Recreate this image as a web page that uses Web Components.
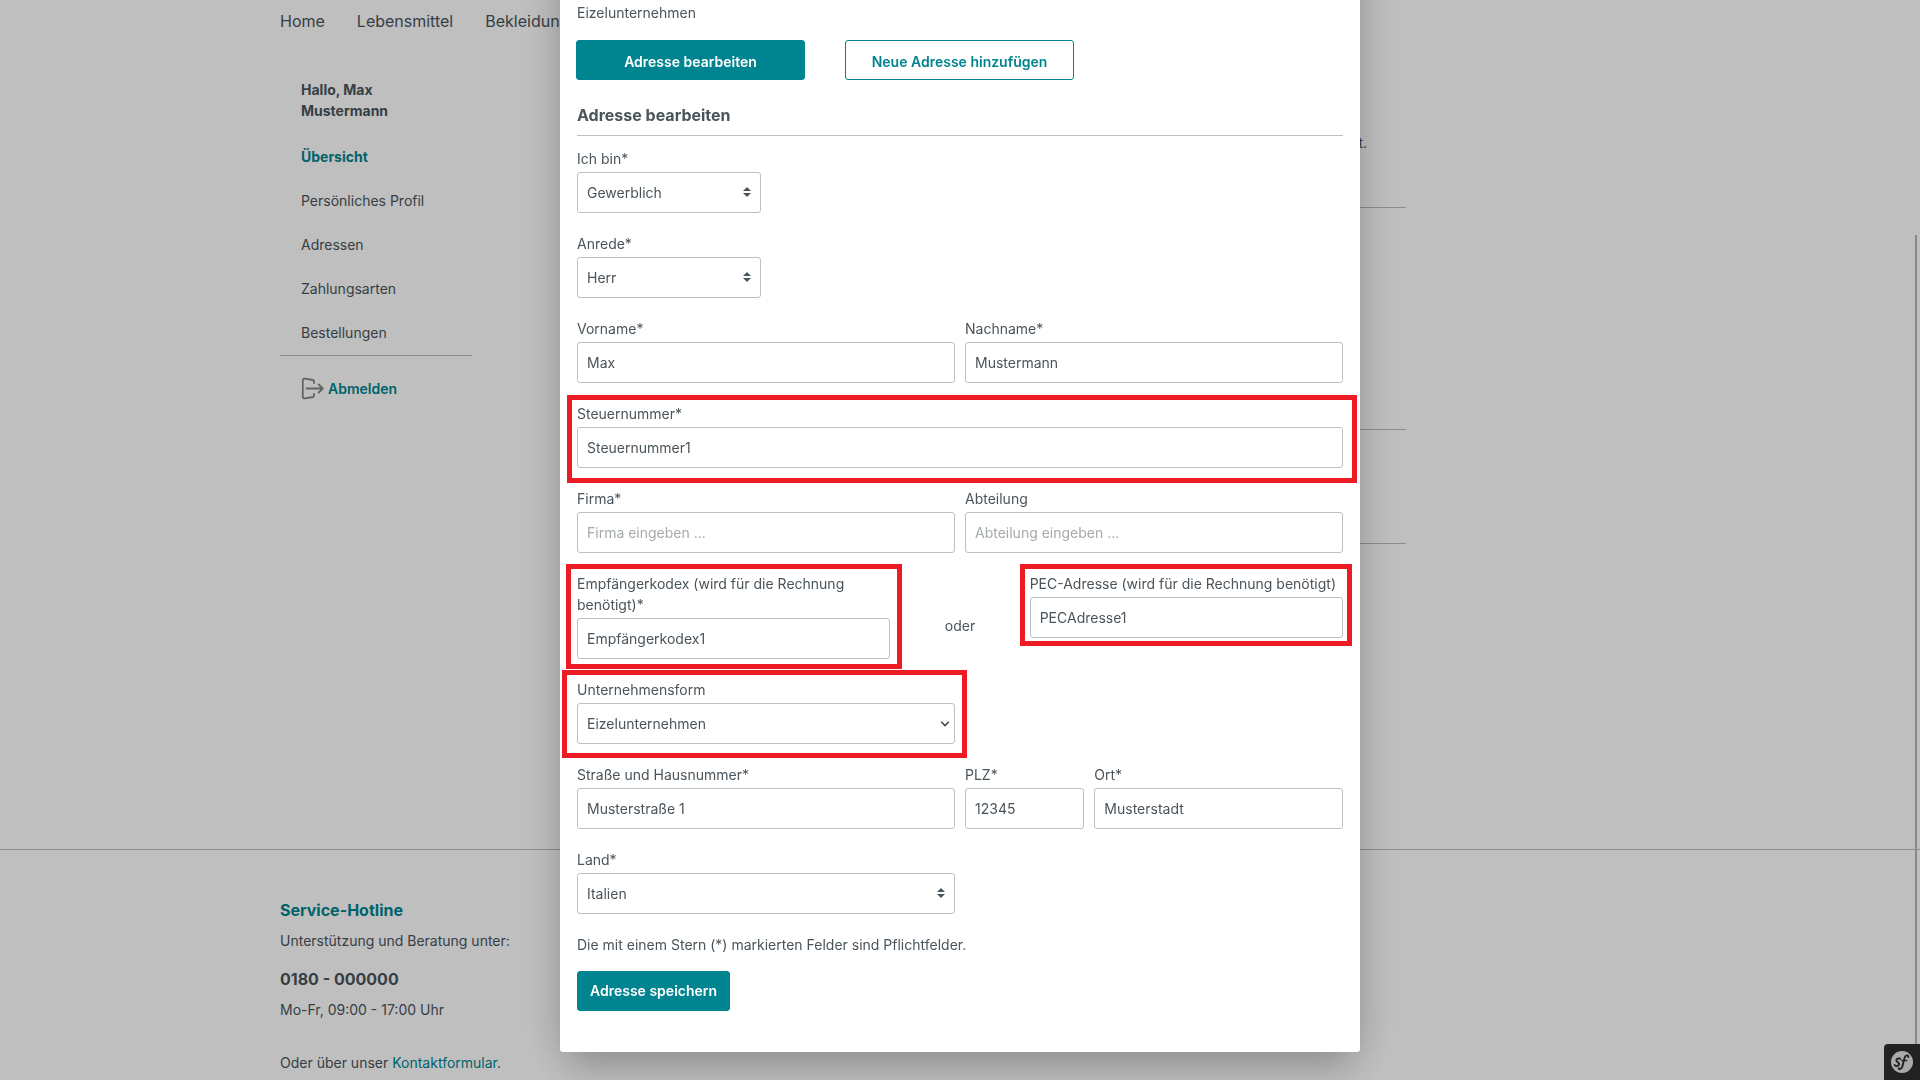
<!DOCTYPE html>
<html lang="de">
<head>
<meta charset="utf-8">
<title>Adresse bearbeiten</title>
<style>
  :root {
    --brand: #008490;
    --text: #4a545b;
    --line: #bcc1c7;
    --mark: #ed1c24;
  }
  html, body { height: 100%; }
  body {
    margin: 0;
    overflow: hidden;
    background: #fff;
    color: var(--text);
    font: 400 14px/21px Inter, "Liberation Sans", sans-serif;
  }
</style>
</head>
<body>
<shop-page>
  <shop-nav slot="nav"></shop-nav>
  <account-sidebar slot="sidebar"></account-sidebar>
  <account-overview slot="content"></account-overview>
  <shop-footer slot="footer"></shop-footer>
</shop-page>
<address-modal>
  <address-form></address-form>
</address-modal>
<debug-toolbar></debug-toolbar>

<script>
  const define = (name, html, setup) => {
    const template = document.createElement("template");
    template.innerHTML = "<style>*{box-sizing:border-box}a{color:inherit;text-decoration:none}</style>" + html;
    customElements.define(name, class extends HTMLElement {
      constructor() {
        super();
        this.attachShadow({ mode: "open" }).append(template.content.cloneNode(true));
      }
      connectedCallback() {
        if (setup && !this.ready) { this.ready = true; setup(this, this.shadowRoot); }
      }
    });
  };

  /* Shop page behind the dialog */
  define("shop-page", `
    <style>
      :host { display: flex; flex-direction: column; height: 100vh; overflow: hidden; position: relative; }
      .wrap { width: 100%; max-width: 1360px; margin: 0 auto; }
      .main { display: grid; grid-template-columns: 192px 1fr; column-gap: 96px; padding-top: 46px; height: 816px; flex: none; }
      footer { border-top: 1px solid #b8bcc0; padding-top: 48px; flex: none; }
      .thumb { position: absolute; right: 3px; top: 235px; bottom: 0; width: 2px; background: #b4b4b4; }
    </style>
    <header class="wrap"><slot name="nav"></slot></header>
    <main class="wrap main"><slot name="sidebar"></slot><slot name="content"></slot></main>
    <footer><div class="wrap"><slot name="footer"></slot></div></footer>
    <div class="thumb"></div>
  `);

  define("shop-nav", `
    <style>
      :host { display: block; }
      nav { display: flex; gap: 32px; padding-top: 9px; font-size: 16px; line-height: 24px; }
    </style>
    <nav><a href="#home">Home</a><a href="#lebensmittel">Lebensmittel</a><a href="#bekleidung">Bekleidung</a></nav>
  `);

  define("account-sidebar", `
    <style>
      :host { display: block; }
      .hello { margin: 0 64px 13px 21px; font-weight: 700; }
      ul { list-style: none; margin: 0; padding: 0 0 1px 21px; }
      li { padding: 12px 0 11px; }
      .active { color: var(--brand); font-weight: 700; }
      .logout { display: flex; align-items: center; gap: 4px; padding: 21px 0 0 21px; border-top: 1px solid #b8bcc0; color: var(--brand); font-weight: 600; }
      svg { display: block; width: 23px; height: 23px; }
    </style>
    <p class="hello">Hallo, Max Mustermann</p>
    <ul>
      <li><a class="active" href="#uebersicht">Übersicht</a></li>
      <li><a href="#profil">Persönliches Profil</a></li>
      <li><a href="#adressen">Adressen</a></li>
      <li><a href="#zahlungsarten">Zahlungsarten</a></li>
      <li><a href="#bestellungen">Bestellungen</a></li>
    </ul>
    <a class="logout" href="#abmelden">
      <svg viewBox="0 0 23 23" fill="none" stroke="#858585" stroke-width="1.8" stroke-linecap="round" stroke-linejoin="round" aria-hidden="true">
        <path d="M13 6V4.2Q13 3.2 12 3L4 1.7Q1.800 1.300 1.800 3.500V19.500Q1.800 21.700 4 21.300L12 20Q13 19.800 13 18.800V17M5.500 11.500H21.500M17.800 7.500L21.800 11.500L17.800 15.500"/>
      </svg>Abmelden</a>
  `);

  define("account-overview", `
    <style>
      :host { display: block; padding-right: 234px; }
      p { margin: 0; padding-right: 39px; text-align: right; }
      section { border-bottom: 1px solid #b8bcc0; }
      .intro { height: 129px; padding-top: 53px; }
      .profile { height: 222px; }
      .address { height: 114px; }
    </style>
    <section class="intro"><p>t.</p></section>
    <section class="profile"></section>
    <section class="address"></section>
  `);

  define("shop-footer", `
    <style>
      :host { display: block; }
      h2, p { margin: 0; }
      h2, .phone { font-size: 16px; line-height: 24px; font-weight: 700; }
      h2, a { color: var(--brand); }
      h2 { margin-bottom: 8px; }
      .phone { margin: 16px 0 8px; }
      .contact { margin-top: 32px; }
    </style>
    <h2>Service-Hotline</h2>
    <p>Unterstützung und Beratung unter:</p>
    <p class="phone">0180 - 000000</p>
    <p>Mo-Fr, 09:00 - 17:00 Uhr</p>
    <p class="contact">Oder über unser <a href="#kontakt">Kontaktformular</a>.</p>
  `);

  /* Dialog: its upper part is scrolled out of the window */
  define("address-modal", `
    <style>
      :host { position: fixed; inset: 0; overflow: hidden; background: rgba(0, 0, 0, .25); }
      .dialog {
        width: 800px; max-width: 100%; margin: -80px auto 0; padding: 82px 17px 41px;
        background: #fff; border-radius: 3px;
        box-shadow: 0 0 46px rgba(0, 0, 0, .15), 0 24px 38px -8px rgba(0, 0, 0, .19);
      }
    </style>
    <div class="dialog" role="dialog" aria-label="Adresse bearbeiten"><slot></slot></div>
  `);

  define("shop-button", `
    <style>
      :host { display: block; }
      button {
        display: block; width: 100%; height: 40px; padding: 2px 12px; margin: 0;
        border: 1px solid var(--brand); border-radius: 3px; background: var(--brand); color: #fff;
        font: 600 14px/34px Inter, "Liberation Sans", sans-serif;
      }
      :host([outline]) button { background: #fff; color: var(--brand); }
      :host([wide]) button { padding: 4px 12px 2px; }
    </style>
    <button type="button"><slot></slot></button>
  `);

  /* Labelled input or select. Attributes: label, value, placeholder, select="spinner|chevron" */
  define("form-field", `
    <style>
      :host { display: block; position: relative; grid-column: span var(--span, 6); }
      label { display: block; margin-bottom: 3px; }
      .control { display: grid; align-items: center; }
      .control > * { grid-area: 1 / 1; }
      input, select {
        display: block; width: 100%; min-width: 0; height: 41px; margin: 0; padding: 0 9px;
        border: 1px solid var(--line); border-radius: 3px; background: #fff; color: var(--text);
        font: 400 14px/21px Inter, "Liberation Sans", sans-serif; appearance: none;
      }
      input::placeholder { color: #a5aaad; opacity: 1; }
      svg { display: block; justify-self: end; pointer-events: none; }
      .spinner { width: 8px; height: 10px; margin: 0 10px 1px 0; }
      .chevron { width: 10px; height: 6px; margin-right: 5px; }
    </style>
    <label for="control"></label>
    <div class="control"></div>
  `, (host, root) => {
    root.querySelector("label").textContent = host.getAttribute("label");
    const box = root.querySelector(".control");
    const kind = host.getAttribute("select");
    const value = host.getAttribute("value") || "";
    if (kind) {
      const select = document.createElement("select");
      select.id = "control";
      select.add(new Option(value));
      box.append(select);
      box.insertAdjacentHTML("beforeend", kind === "chevron"
        ? '<svg class="chevron" viewBox="0 0 10 6" aria-hidden="true"><path d="M1.200 .8L5 4.600L8.800 .8" fill="none" stroke="#3f484f" stroke-width="1.500"/></svg>'
        : '<svg class="spinner" viewBox="0 0 4 5" aria-hidden="true"><path d="M2 0L0 2h4zM2 5L0 3h4z" fill="#4a545b"/></svg>');
    } else {
      const input = document.createElement("input");
      input.id = "control";
      input.type = "text";
      input.value = value;
      input.placeholder = host.getAttribute("placeholder") || "";
      box.append(input);
    }
  });

  /* Red frame laid over the field it wraps */
  define("marked-area", `
    <style>
      :host { display: block; position: relative; grid-column: span var(--span, 6); align-self: start; }
      .frame { position: absolute; inset: var(--frame); border: 5px solid var(--mark); pointer-events: none; }
    </style>
    <slot></slot><div class="frame"></div>
  `);

  define("address-form", `
    <style>
      :host { display: block; }
      p, h1 { margin: 0; }
      .actions { display: flex; gap: 40px; margin: 17px 0 23px -1px; }
      .actions shop-button { width: 229px; }
      h1 { padding-bottom: 8px; margin-bottom: 12px; border-bottom: 1px solid var(--line); font-size: 16px; line-height: 24px; font-weight: 700; }
      form { display: grid; grid-template-columns: repeat(12, minmax(0, 1fr)); gap: 20px 10px; }
      .break { grid-column: 1 / span var(--span, 6); }
      .or { grid-column: span 2; align-self: center; text-align: center; padding-top: 18px; }
      .note { grid-column: 1 / -1; }
      .save { grid-column: 1 / -1; justify-self: start; margin-top: -4px; }
    </style>
    <p>Eizelunternehmen</p>
    <div class="actions">
      <shop-button wide>Adresse bearbeiten</shop-button>
      <shop-button wide outline>Neue Adresse hinzufügen</shop-button>
    </div>
    <h1>Adresse bearbeiten</h1>
    <form>
      <form-field class="break" style="--span:3" label="Ich bin*" value="Gewerblich" select="spinner"></form-field>
      <form-field class="break" style="--span:3" label="Anrede*" value="Herr" select="spinner"></form-field>
      <form-field class="break" label="Vorname*" value="Max"></form-field>
      <form-field label="Nachname*" value="Mustermann"></form-field>
      <marked-area style="--span:12;--frame:-8px -14px -15px -10px">
        <form-field label="Steuernummer*" value="Steuernummer1"></form-field>
      </marked-area>
      <form-field label="Firma*" placeholder="Firma eingeben ..."></form-field>
      <form-field label="Abteilung" placeholder="Abteilung eingeben ..."></form-field>
      <marked-area style="--span:5;--frame:-9px -12px -10px -11px">
        <form-field label="Empfängerkodex (wird für die Rechnung benötigt)*" value="Empfängerkodex1"></form-field>
      </marked-area>
      <p class="or">oder</p>
      <marked-area style="--span:5;--frame:-9px -9px -8px -10px">
        <form-field label="PEC-Adresse (wird für die Rechnung benötigt)" value="PECAdresse1"></form-field>
      </marked-area>
      <marked-area class="break" style="--frame:-9px -12px -14px -15px">
        <form-field label="Unternehmensform" value="Eizelunternehmen" select="chevron"></form-field>
      </marked-area>
      <form-field class="break" label="Straße und Hausnummer*" value="Musterstraße 1"></form-field>
      <form-field style="--span:2" label="PLZ*" value="12345"></form-field>
      <form-field style="--span:4" label="Ort*" value="Musterstadt"></form-field>
      <form-field class="break" label="Land*" value="Italien" select="spinner"></form-field>
      <p class="note">Die mit einem Stern (*) markierten Felder sind Pflichtfelder.</p>
      <shop-button class="save">Adresse speichern</shop-button>
    </form>
  `);

  define("debug-toolbar", `
    <style>
      :host { position: fixed; right: 0; bottom: 0; display: block; }
      button { display: flex; align-items: center; justify-content: center; width: 36px; height: 36px; margin: 0; padding: 0; border: 0; border-radius: 4px 0 0 0; background: #222; }
      svg { display: block; width: 24px; height: 24px; }
    </style>
    <button type="button" aria-label="Symfony">
      <svg viewBox="0 0 24 24" aria-hidden="true">
        <circle cx="12" cy="12" r="11" fill="#aaa"/>
        <g fill="none" stroke="#222" stroke-linecap="round" stroke-linejoin="round">
          <path stroke-width="1.900" d="M10.300 9.100C10 7.900 6.400 8.300 6.300 10.300C6.200 12.100 9.300 12.100 9.200 14.200C9 16.400 5 16.500 4.700 14.900"/>
          <path stroke-width="1.900" d="M18.300 7.100C18.800 5.500 16.400 4.500 15.100 6.600C13.600 9.300 13.400 14.500 11.900 17.500C10.900 19.300 8.700 19.700 8.700 18.200"/>
          <path stroke-width="1.600" d="M11.800 10.500H16.800"/>
        </g>
      </svg>
    </button>
  `);
</script>
</body>
</html>
